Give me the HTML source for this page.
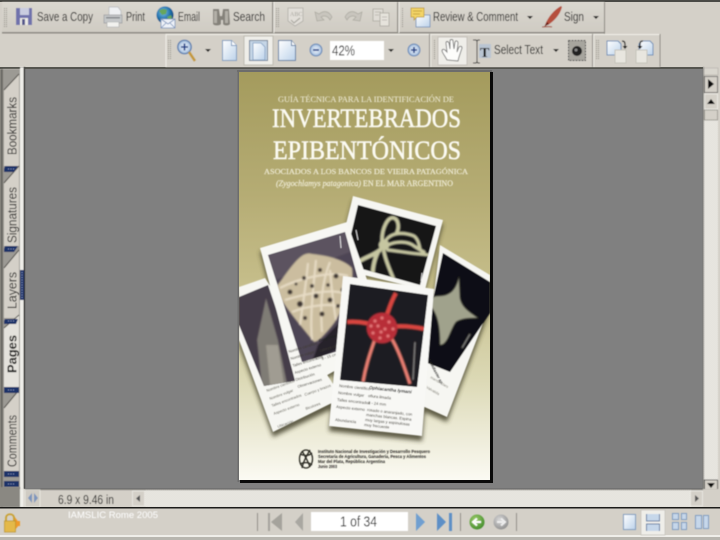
<!DOCTYPE html>
<html>
<head>
<meta charset="utf-8">
<style>
html,body{margin:0;padding:0;background:#d4d0c8;width:720px;height:540px;overflow:hidden}
svg{display:block}
text{font-family:"Liberation Sans",sans-serif}
.t{font-size:12.5px;fill:#1c1c1c}
.s{font-family:"Liberation Serif",serif}
</style>
</head>
<body>
<svg width="720" height="540" viewBox="0 0 720 540" xmlns="http://www.w3.org/2000/svg">
<defs>
<linearGradient id="cover" x1="0" y1="0" x2="0" y2="1">
<stop offset="0" stop-color="#a49b5d"/><stop offset=".3" stop-color="#b5ac74"/><stop offset=".5" stop-color="#c4bc88"/><stop offset=".75" stop-color="#dbd8b4"/><stop offset="1" stop-color="#fbfaf3"/>
</linearGradient>
<linearGradient id="tb" x1="0" y1="0" x2="0" y2="1"><stop offset="0" stop-color="#dad7cf"/><stop offset="1" stop-color="#cfcbc3"/></linearGradient>
<linearGradient id="pg" x1="0" y1="0" x2="1" y2="1"><stop offset="0" stop-color="#fff"/><stop offset="1" stop-color="#bcd2ea"/></linearGradient>
<radialGradient id="globe" cx=".4" cy=".35" r=".7"><stop offset="0" stop-color="#7dc0e8"/><stop offset=".6" stop-color="#1f6fa8"/><stop offset="1" stop-color="#123f70"/></radialGradient>
<radialGradient id="grn" cx=".4" cy=".35" r=".7"><stop offset="0" stop-color="#a2cf6c"/><stop offset="1" stop-color="#3e8a2a"/></radialGradient>
<radialGradient id="gry" cx=".4" cy=".35" r=".7"><stop offset="0" stop-color="#d8d8d8"/><stop offset="1" stop-color="#8e8e8e"/></radialGradient>
<radialGradient id="blu" cx=".5" cy=".5" r=".55"><stop offset="0" stop-color="#f2f6fb"/><stop offset=".65" stop-color="#bcd0e8"/><stop offset="1" stop-color="#6f8fbc"/></radialGradient>
<pattern id="dither" width="2" height="2" patternUnits="userSpaceOnUse"><rect width="2" height="2" fill="#d8d5cd"/><rect width="1" height="1" fill="#f4f3ef"/><rect x="1" y="1" width="1" height="1" fill="#f4f3ef"/></pattern>
<pattern id="grip" width="2" height="2" patternUnits="userSpaceOnUse"><rect width="1" height="1" fill="#8a877f"/></pattern>
<filter id="b" x="-5%" y="-5%" width="110%" height="110%"><feGaussianBlur stdDeviation=".4"/></filter>
<filter id="b1" x="-5%" y="-5%" width="110%" height="110%"><feGaussianBlur stdDeviation=".8"/></filter>
<filter id="sh" x="-20%" y="-20%" width="140%" height="140%"><feGaussianBlur stdDeviation="2.5"/></filter>
<clipPath id="cpage"><rect x="239" y="72" width="251" height="408"/></clipPath>
<clipPath id="ph2"><polygon points="358,205 436,226 420,285 344,264"/></clipPath>
<clipPath id="ph1"><polygon points="268,255 345,232 375,340 302,362"/></clipPath>
<clipPath id="ph0"><polygon points="239,297 268,285 300,380 264,386 239,325"/></clipPath>
<clipPath id="ph3"><polygon points="443,253 490,282 490,313 450,372 420,360"/></clipPath>
<clipPath id="ph4"><polygon points="350,284 428,295 417,387 340,380"/></clipPath>
</defs>

<rect width="720" height="540" fill="#d4d0c8"/>
<rect y="0" width="720" height="2" fill="#4a4a46"/>
<rect y="67" width="720" height="2" fill="#55554f"/>

<g filter="url(#b)">
<rect x="2" y="2" width="270" height="31" fill="url(#tb)"/>
<rect x="274" y="2" width="123" height="31" fill="url(#tb)"/>
<rect x="399" y="2" width="205" height="31" fill="url(#tb)"/>
<rect x="2" y="32" width="602" height="1.500" fill="#8c8982"/>
<rect x="604" y="2" width="1" height="32" fill="#8c8982"/>
<rect x="272" y="2" width="1.400" height="31" fill="#8f8c85"/>
<rect x="273.400" y="2" width="1" height="31" fill="#f2f0ea"/>
<rect x="397" y="2" width="1.400" height="31" fill="#8f8c85"/>
<rect x="398.400" y="2" width="1" height="31" fill="#f2f0ea"/>
<rect x="166" y="34" width="494" height="33" fill="#d4d0c8"/>
<rect x="166" y="34" width="494" height="1" fill="#f2f0ea"/>
<rect x="165.500" y="34" width="1" height="33" fill="#f2f0ea"/>
<rect x="429" y="34" width="1.200" height="33" fill="#8f8c85"/>
<rect x="430.200" y="34" width="1" height="33" fill="#f2f0ea"/>
<rect x="592" y="34" width="1.200" height="33" fill="#8f8c85"/>
<rect x="593.200" y="34" width="1" height="33" fill="#f2f0ea"/>
<rect x="659.500" y="34" width="1" height="33" fill="#8f8c85"/>
<rect x="4" y="8" width="3" height="20" fill="url(#grip)"/>
<rect x="276" y="8" width="3" height="20" fill="url(#grip)"/>
<rect x="401" y="8" width="3" height="20" fill="url(#grip)"/>
<rect x="168" y="40" width="3" height="20" fill="url(#grip)"/>
<rect x="433" y="40" width="3" height="20" fill="url(#grip)"/>
<rect x="596" y="40" width="3" height="20" fill="url(#grip)"/>

<path d="M16 8h16v17H16z" fill="#6f72ac"/><path d="M20 8h9v7h-9z" fill="#c9cce0"/><path d="M20 18h8v7h-8z" fill="#ecebe6"/><rect x="22" y="19" width="3" height="6" fill="#55588c"/>
<text class="t" x="37" y="21" textLength="56" lengthAdjust="spacingAndGlyphs">Save a Copy</text>
<path d="M109 7h9l3 4v6h-12z" fill="#eef0f2" stroke="#b5b8bd" stroke-width=".7"/><path d="M104 15h18v8h-18z" fill="#c4c7c8" stroke="#9a9c9f" stroke-width=".7"/><path d="M107 22h12v5h-12z" fill="#f2f2ee" stroke="#a9abad" stroke-width=".6"/><rect x="106" y="17" width="14" height="1.500" fill="#85888c"/>
<text class="t" x="126" y="21" textLength="19" lengthAdjust="spacingAndGlyphs">Print</text>
<circle cx="165" cy="15" r="8.600" fill="url(#globe)"/><path d="M159 11c3-3 6-2 8-1l-1 4-4 1zM167 17l4-2 1 3-3 3z" fill="#66a65c"/><path d="M161 19h14v9h-14z" fill="#eef2f8" stroke="#7b94bb" stroke-width=".8"/><path d="M161 19l7 5 7-5M161 28l5-5M175 28l-5-5" fill="none" stroke="#7b94bb" stroke-width=".8"/>
<text class="t" x="178" y="21" textLength="22" lengthAdjust="spacingAndGlyphs">Email</text>
<path d="M213 9h6l1 7h2l1-7h6l1 15c-1 2-6 2-7 0v-4h-2v4c-1 2-7 2-8 0z" fill="#85827a"/><path d="M214 11h3v12h-3zM225 11h3v12h-3z" fill="#b3b0a8"/>
<text class="t" x="233" y="21" textLength="32" lengthAdjust="spacingAndGlyphs">Search</text>
<path d="M288 8h15v13l-8 5-7-5z" fill="#e2dfd9" stroke="#b0aea7" stroke-width=".8"/><text x="290" y="16" font-size="6" fill="#a3a199" class="s">ABC</text><path d="M291 20l3 3 6-5" fill="none" stroke="#aaa8a0" stroke-width="1.200"/>
<path d="M317 21l-2-9 4 2c5-4 10-3 13 3l-2 3c-2-4-6-5-9-3l3 3z" fill="#c8c5bd" stroke="#aaa89f" stroke-width=".7"/>
<path d="M360 21l2-9-4 2c-5-4-10-3-13 3l2 3c2-4 6-5 9-3l-3 3z" fill="#c8c5bd" stroke="#aaa89f" stroke-width=".7"/>
<path d="M373 9h10v12h-10z" fill="#dfdcd5" stroke="#aaa89f" stroke-width=".8"/><path d="M380 13h9v13h-9z" fill="#e6e3dc" stroke="#aaa89f" stroke-width=".8"/><path d="M375 12h6M375 15h4M382 17h5M382 20h5" stroke="#b4b1a9" stroke-width=".8"/>
<path d="M416 15h14v12h-14z" fill="url(#pg)" stroke="#6e8cb4" stroke-width=".8"/><path d="M411 8h13v9h-7l-3 3v-3h-3z" fill="#f3d468" stroke="#b8952f" stroke-width=".7"/><path d="M413 11h9M413 14h7" stroke="#b8952f" stroke-width=".7"/>
<text class="t" x="433" y="21" textLength="85" lengthAdjust="spacingAndGlyphs">Review &amp; Comment</text>
<path d="M527 16h6l-3 3z" fill="#222"/>
<path d="M545 25c3-8 9-15 16-19l1 1c-2 8-8 14-14 18z" fill="#b5503c"/><path d="M544 27l3-5 2 2z" fill="#6a1a12"/><path d="M542 27c4 0 7-1 10 0" stroke="#a24b3a" fill="none"/>
<text class="t" x="564" y="21" textLength="20" lengthAdjust="spacingAndGlyphs">Sign</text>
<path d="M593 16h6l-3 3z" fill="#222"/>

<circle cx="184.500" cy="47" r="6.800" fill="url(#blu)" stroke="#5d7fae" stroke-width="1.200"/><path d="M181 47h7M184.500 43.500v7" stroke="#1f3f86" stroke-width="1.600"/><path d="M189 52l6 9" stroke="#c49a3a" stroke-width="2.600"/>
<path d="M205 49h6l-3 3z" fill="#222"/>
<path d="M222.500 40.500h9l5 5v15h-14z" fill="url(#pg)" stroke="#7f9cc0"/><path d="M231.500 40.500v5h5" fill="#fff" stroke="#7f9cc0"/>
<rect x="244" y="36" width="29" height="29" fill="#efeee9" stroke="#bcb9b0"/>
<rect x="249.500" y="40.500" width="18" height="20" fill="#c5d5e6" stroke="#6f8096"/><path d="M253 43h8l4 4v13h-12z" fill="url(#pg)" stroke="#7f9cc0" stroke-width=".8"/>
<path d="M278.500 40.500h13l4 5v15h-17z" fill="url(#pg)" stroke="#5f7fa6"/><path d="M291.500 40.500v5h4" fill="#fff" stroke="#5f7fa6"/>
<circle cx="316" cy="50" r="6" fill="url(#blu)" stroke="#6c8cb8"/><path d="M313 50h6" stroke="#1f3f86" stroke-width="1.600"/>
<rect x="330" y="41" width="54" height="19" fill="#fff"/>
<text x="332" y="55.500" font-size="14.500" fill="#222" textLength="23" lengthAdjust="spacingAndGlyphs">42%</text>
<path d="M388 49h6l-3 3z" fill="#222"/>
<circle cx="414" cy="50" r="6" fill="url(#blu)" stroke="#6c8cb8"/><path d="M411 50h6M414 47v6" stroke="#1f3f86" stroke-width="1.600"/>
<rect x="438" y="37" width="29" height="28" fill="#efeee9" stroke="#c4c1b9"/>
<path d="M447 60c-2-4-4-6-5-9 0-2 2-2 3-1l2 2-1-9c0-2 2-2 3 0l1 6 0-8c0-2 3-2 3 0l1 8 1-7c1-2 3-1 3 1l-1 9 2-5c1-1 3-1 3 1l-3 9-1 4z" fill="#fdfdfb" stroke="#777" stroke-width=".9"/>
<path d="M473 40h3l1 1 1-1h2M477 41v21M473 63h3l1-1 1 1h2" fill="none" stroke="#333" stroke-width="1"/>
<rect x="479" y="44" width="12" height="14" fill="#b9c5d2"/><text x="480" y="57" font-size="14" font-weight="bold" class="s" fill="#111">T</text>
<text class="t" x="494" y="54" textLength="49" lengthAdjust="spacingAndGlyphs">Select Text</text>
<path d="M553 49h6l-3 3z" fill="#222"/>
<rect x="568.500" y="40.500" width="17" height="20" fill="#a7a59e" stroke="#444" stroke-dasharray="2 1"/><circle cx="577" cy="51" r="5" fill="#222"/><circle cx="576" cy="50" r="1.500" fill="#888"/>
<path d="M607 41h11l3 3v11h-14z" fill="url(#pg)" stroke="#6f90b8"/><path d="M615 50h11v13h-11z" fill="#e8e6df" stroke="#c5c3ba"/><path d="M622 41c2 0 3 1 3 3v2" fill="none" stroke="#111" stroke-width="1.200"/><path d="M622.500 46h5l-2.500 3z" fill="#111"/>
<path d="M641 41h9l3 3v11h-14v-11z" fill="url(#pg)" stroke="#6f90b8"/><path d="M636 50h11v13h-11z" fill="#e8e6df" stroke="#c5c3ba"/><path d="M640 47v-3c0-2 1-3 3-3" fill="none" stroke="#111" stroke-width="1.200"/><path d="M637.500 46h5l-2.500 3z" fill="#111"/>
</g>

<rect x="25" y="69" width="678" height="420" fill="#808080"/>
<rect x="703" y="67" width="17" height="423" fill="#d4d0c8"/>
<rect x="24" y="69" width="1" height="420" fill="#555"/>

<g filter="url(#b)">
<rect x="0" y="69" width="20" height="438" fill="#9c9a94"/>
<rect x="0" y="69" width="3" height="438" fill="#6e6d68"/>
<rect x="20" y="67" width="3.500" height="422" fill="#efeee9"/>
<rect x="23.500" y="67" width="1.500" height="422" fill="#3c3c3a"/>
<rect x="20" y="270" width="4" height="30" fill="#1c3068"/>
<path d="M4 90L19 74V166H4z" fill="#d4d0c8"/><path d="M4 90L19 74" stroke="#55534e" fill="none"/>
<path d="M4 183L19 166V246H4z" fill="#d4d0c8"/><path d="M4 183L19 166" stroke="#55534e" fill="none"/>
<path d="M4 268L19 250V318H4z" fill="#d4d0c8"/><path d="M4 268L19 250" stroke="#55534e" fill="none"/>
<path d="M4 328L19 315V388H4z" fill="#e4e2dc"/><path d="M4 328L19 315" stroke="#55534e" fill="none"/>
<path d="M4 408L19 390V472H4z" fill="#d4d0c8"/><path d="M4 408L19 390" stroke="#55534e" fill="none"/>
<path d="M4 172h10l4-6h-13l-1 3z" fill="#1c3068"/>
<path d="M4 252h10l4-6h-13l-1 3z" fill="#1c3068"/>
<path d="M4 324h12l2-5h-13l-1 2z" fill="#1c3068"/>
<rect x="4" y="387" width="15" height="6" fill="#1c3068"/>
<rect x="4" y="471" width="15" height="6" fill="#1c3068"/>
<rect x="4" y="481" width="15" height="6" fill="#1c3068"/>
<path d="M8 169h7M8 249h7M8 321h7M8 390h7M8 474h7M8 484h7" stroke="#9fb2dc" stroke-width=".8" stroke-dasharray="1 1.500"/>
<path d="M22 272v26" stroke="#9fb2dc" stroke-width=".8" stroke-dasharray="1 1.500"/>
<text transform="translate(16.500,155) rotate(-90)" font-size="12.500" fill="#222" textLength="58" lengthAdjust="spacingAndGlyphs">Bookmarks</text>
<text transform="translate(16.500,243) rotate(-90)" font-size="12.500" fill="#222" textLength="56" lengthAdjust="spacingAndGlyphs">Signatures</text>
<text transform="translate(16.500,309) rotate(-90)" font-size="12.500" fill="#222" textLength="37" lengthAdjust="spacingAndGlyphs">Layers</text>
<text transform="translate(16.500,373) rotate(-90)" font-size="12.500" font-weight="bold" fill="#111" textLength="38" lengthAdjust="spacingAndGlyphs">Pages</text>
<text transform="translate(16.500,467) rotate(-90)" font-size="12.500" fill="#222" textLength="52" lengthAdjust="spacingAndGlyphs">Comments</text>
</g>

<rect x="237" y="70" width="255" height="2" fill="#6c6c6c"/>
<rect x="237.500" y="71" width="2" height="411" fill="#6c6c6c"/>
<rect x="490" y="72" width="3" height="411" fill="#0a0a0a"/>
<rect x="240" y="480" width="253" height="3" fill="#0a0a0a"/>
<rect x="239" y="72" width="251" height="408" fill="url(#cover)"/>

<g clip-path="url(#cpage)">
<g filter="url(#b)">
<text class="s" x="278" y="102" font-size="8.200" fill="#f3f0de" textLength="176" lengthAdjust="spacingAndGlyphs">GUÍA TÉCNICA PARA LA IDENTIFICACIÓN DE</text>
<text class="s" x="272" y="127" font-size="26" fill="#fbfaf2" stroke="#fbfaf2" stroke-width=".55" textLength="189" lengthAdjust="spacingAndGlyphs">INVERTEBRADOS</text>
<text class="s" x="273" y="159" font-size="26" fill="#fbfaf2" stroke="#fbfaf2" stroke-width=".55" textLength="188" lengthAdjust="spacingAndGlyphs">EPIBENTÓNICOS</text>
<text class="s" x="264" y="174" font-size="7.800" fill="#f0edd8" stroke="#f0edd8" stroke-width=".15" textLength="204" lengthAdjust="spacingAndGlyphs">ASOCIADOS A LOS BANCOS DE VIEIRA PATAGÓNICA</text>
<text class="s" x="276" y="186" font-size="8" fill="#f0edd8" stroke="#f0edd8" stroke-width=".15" textLength="177" lengthAdjust="spacingAndGlyphs"><tspan font-style="italic">(Zygochlamys patagonica)</tspan> EN EL MAR ARGENTINO</text>
</g>

<g filter="url(#sh)" fill="#3a3824" opacity=".8">
<polygon points="353,200 443,224 425,290 335,270"/>
<polygon points="260,252 347,226 385,340 298,398"/>
<polygon points="239,292 265,283 340,405 273,437 239,345"/>
<polygon points="440,250 490,280 490,310 447,422 420,410"/>
<polygon points="343,281 434,294 422,441 329,431"/>
</g>

<g filter="url(#b)">
<polygon points="239,287 265,278 342,398 273,432 239,340" fill="#f6f6f2"/>
<polygon points="239,297 268,285 300,380 264,386 239,325" fill="#453c48"/>
<g clip-path="url(#ph0)" filter="url(#b1)">
<path d="M266 298L257 340 262 388H288L278 340z" fill="#7f7b74"/>
<path d="M266 345l4 40h14l-6-40z" fill="#a09c92"/>
</g>
<g fill="#5a584e" font-size="3.800" font-family="Liberation Serif">
<text transform="translate(267,392) rotate(-20)">Nombre científico</text>
<text transform="translate(270,400) rotate(-20)">Nombre vulgar</text>
<text transform="translate(272,407) rotate(-20)">Talles encontrados</text>
<text transform="translate(274,415) rotate(-20)">Aspecto externo</text>
<text transform="translate(278,428) rotate(-20)">Ubicación</text>
<text transform="translate(305,396) rotate(-20)">Cuerpo y brazos</text>
<text transform="translate(306,410) rotate(-20)">Bicolores</text>
</g>

<polygon points="440,245 490,275 490,305 447,417 420,405" fill="#f6f6f2"/>
<polygon points="443,253 490,282 490,313 450,372 420,360" fill="#111113"/>
<g clip-path="url(#ph3)" filter="url(#b1)">
<path d="M459 277C456 288 452 296 438 296 430 296 428 302 432 308 436 314 440 322 440 345 448 345 450 330 456 322 462 318 470 318 478 318 470 312 462 308 460 298z" fill="#a0a28c"/>
<path d="M462 348l8-14" stroke="#cfcfc8" stroke-width="1"/>
</g>
<text transform="translate(428,360) rotate(62)" font-size="4" font-family="Liberation Serif" font-weight="bold" font-style="italic" fill="#222">Labidiaster sp.</text>
<g fill="#77756a" font-size="3.600" font-family="Liberation Serif"><text transform="translate(430,378) rotate(30)">marrón claro</text><text transform="translate(426,388) rotate(30)">Valvatida</text></g>

<polygon points="353,196 443,220 425,290 335,268" fill="#f6f6f2"/>
<polygon points="358,205 436,226 420,285 344,264" fill="#121216"/>
<g clip-path="url(#ph2)" fill="none" stroke="#c6c6a0" stroke-linecap="round" filter="url(#b1)">
<circle cx="384" cy="245" r="5" fill="#c6c6a0"/>
<path d="M382 240c0-12 6-24 12-22 5 2 5 10 3 14" stroke-width="4"/>
<path d="M386 240c6-8 18-8 28-4 4 3 5 8 6 13" stroke-width="3.500"/>
<path d="M388 245c8-4 20-4 26 1 3 2 6 4 10 6" stroke-width="3.500"/>
<path d="M388 250c10 1 26 4 42 5" stroke-width="3.500"/>
<path d="M380 250c-6 5-14 7-20 11" stroke-width="4.500"/>
<path d="M384 252c2 10 6 18 10 28" stroke-width="4"/>
<path d="M378 252c-4 8-6 18-5 26" stroke-width="4.500"/>
</g>
<path d="M421 281l1-8M356 230l2 10" stroke="#eee" stroke-width=".8"/>

<polygon points="260,248 347,222 388,340 298,392" fill="#f7f7f3"/>
<polygon points="268,255 345,232 375,340 302,362" fill="#4e4554"/>
<g clip-path="url(#ph1)" filter="url(#b1)">
<polygon points="268,255 345,232 350,252 275,280" fill="#5b5361"/>
<path d="M275 288C290 270 300 250 312 254 330 256 345 260 352 268 355 285 345 305 335 322 325 335 318 342 314 342 308 335 300 325 292 315 285 305 278 297 275 288z" fill="#cbbd9f"/>
<path d="M280 288c15-8 50-18 68-12M285 300c20-6 45-12 62-6M292 312c15-6 40-10 50-4M312 340c-2-20 0-40 4-80M322 332c-2-30 0-50 8-70M300 325c2-15 6-40 8-62M336 320c-3-15-4-30-6-50" stroke="#e8ddc6" stroke-width="2" fill="none"/>
<g fill="#3e3530"><circle cx="290" cy="292" r="2.500"/><circle cx="304" cy="278" r="2"/><circle cx="320" cy="270" r="2"/><circle cx="336" cy="276" r="2.500"/><circle cx="343" cy="290" r="2.500"/><circle cx="300" cy="304" r="3"/><circle cx="316" cy="296" r="2.500"/><circle cx="330" cy="300" r="2.500"/><circle cx="305" cy="318" r="2"/><circle cx="322" cy="314" r="2.500"/><circle cx="296" cy="284" r="1.500"/><circle cx="312" cy="286" r="2"/><circle cx="328" cy="285" r="1.800"/><circle cx="338" cy="306" r="2"/></g>
<polygon points="318,345 340,322 372,332 312,362" fill="#26242c"/>
</g>
<path d="M340 236l1 12" stroke="#eee" stroke-width=".9"/>
<g fill="#3e3c34" font-size="3.800" font-family="Liberation Serif">
<text transform="translate(289,353) rotate(-17)">Nombre científico</text>
<text transform="translate(319,342) rotate(-17)" font-weight="bold" font-style="italic" fill="#222">Gorgonocephalus</text>
<text transform="translate(291,360) rotate(-17)">Nombre vulgar</text>
<text transform="translate(293,367) rotate(-17)">Talles encontrados</text>
<text transform="translate(295,374) rotate(-17)">Aspecto externo</text>
<text transform="translate(296,381) rotate(-17)">Distribución</text>
<text transform="translate(298,388) rotate(-17)">Observaciones</text>
<text transform="translate(320,352) rotate(-17)">cabeza canasta</text>
<text transform="translate(322,360) rotate(-17)">8 - 15 cm</text>
</g>

<polygon points="343,276 434,289 422,436 329,426" fill="#f8f8f5"/>
<polygon points="350,284 428,295 417,387 340,380" fill="#1f1c20"/>
<g clip-path="url(#ph4)" filter="url(#b1)">
<path d="M396 293c-6 10-8 20-12 30M347 322c15-1 25 2 36 6M425 329c-15-3-28-4-40-1" stroke="#d8453f" stroke-width="4.500" fill="none"/>
<path d="M376 336c-5 15-10 28-13 46M390 336c8 12 14 30 20 48" stroke="#ea7f72" stroke-width="3.500" fill="none"/>
<circle cx="382" cy="328" r="15.500" fill="#b82d38"/>
<g fill="#e87b7d"><circle cx="375" cy="321" r="1.500"/><circle cx="382" cy="318" r="1.500"/><circle cx="389" cy="322" r="1.500"/><circle cx="393" cy="329" r="1.500"/><circle cx="388" cy="336" r="1.500"/><circle cx="380" cy="338" r="1.500"/><circle cx="373" cy="333" r="1.500"/><circle cx="371" cy="326" r="1.500"/><circle cx="378" cy="326" r="1.500"/><circle cx="385" cy="329" r="1.500"/><circle cx="381" cy="332" r="1.500"/></g>
<path d="M415 342l-2 38" stroke="#d8d8d2" stroke-width=".9"/>
</g>
<g fill="#3a3830" font-size="4" font-family="Liberation Serif">
<text transform="translate(339,387) rotate(6)">Nombre científico</text>
<text transform="translate(369,389) rotate(6)" font-weight="bold" font-style="italic" fill="#111" font-size="4.500">Ophiacantha lymani</text>
<text transform="translate(338,394) rotate(6)">Nombre vulgar</text>
<text transform="translate(368,397) rotate(6)">ofiura ilmada</text>
<text transform="translate(337,401) rotate(6)">Talles encontrados</text>
<text transform="translate(368,404) rotate(6)">3 - 24 mm</text>
<text transform="translate(336,408) rotate(6)">Aspecto externo</text>
<text transform="translate(367,411) rotate(6)">rosado o anaranjado, con</text>
<text transform="translate(366,416) rotate(6)">manchas blancas. Espina</text>
<text transform="translate(365,421) rotate(6)">muy largas y espinulosas</text>
<text transform="translate(364,426) rotate(6)">muy frecuente</text>
<text transform="translate(335,421) rotate(6)">Abundancia</text>
</g>

<g fill="none" stroke="#2c2a22" stroke-width="1.300">
<ellipse cx="306" cy="459" rx="6.500" ry="9"/><path d="M300 454c4 2 9 2 12-1M300 464c4-2 9-2 12 1M302 468c1-6 5-13 8-18M302 451c3 5 6 10 8 16"/>
</g>
<g fill="#1f1d18" font-size="4.700" font-weight="bold">
<text x="318" y="453" textLength="112" lengthAdjust="spacingAndGlyphs">Instituto Nacional de Investigación y Desarrollo Pesquero</text>
<text x="318" y="458" textLength="108" lengthAdjust="spacingAndGlyphs">Secretaría de Agricultura, Ganadería, Pesca y Alimentos</text>
<text x="318" y="463" textLength="67" lengthAdjust="spacingAndGlyphs">Mar del Plata, República Argentina</text>
<text x="318" y="468" textLength="19" lengthAdjust="spacingAndGlyphs">Junio 2003</text>
</g>
</g>
</g>

<g filter="url(#b)">
<rect x="703" y="67" width="1" height="423" fill="#6d6d6a"/>
<rect x="704" y="94" width="14" height="387" fill="url(#dither)"/>
<rect x="704" y="68" width="14" height="7" fill="#d9d6ce" stroke="#a9a69f" stroke-width=".5"/>
<rect x="704.500" y="76.500" width="13" height="16" fill="#d4d0c8" stroke="#555" stroke-width=".7"/>
<path d="M708 79l6 5-6 5z" fill="#111"/>
<rect x="704.500" y="94" width="13" height="15" fill="#d4d0c8" stroke="#efeee9" stroke-width=".7"/>
<path d="M707 104h8l-4-5z" fill="#111"/>
<rect x="704.500" y="110" width="13" height="10" fill="#d4d0c8" stroke="#8a8880" stroke-width=".7"/>
<rect x="704.500" y="480" width="13" height="10" fill="#d4d0c8" stroke="#333" stroke-width=".7"/>
<path d="M707 483h8l-4 5z" fill="#111"/>
</g>

<g filter="url(#b)">
<rect x="20" y="489" width="700" height="18" fill="#d4d0c8"/>
<rect x="25" y="489" width="678" height="1" fill="#3c3c3a"/>
<rect x="145" y="490" width="546" height="17" fill="url(#dither)"/>
<rect x="0" y="487" width="20" height="20" fill="#8a8882"/>
<rect x="20" y="489" width="3.500" height="18" fill="#efeee9"/>
<rect x="25" y="490" width="15" height="17" fill="#cfcbc3" stroke="#efeee9" stroke-width=".7"/>
<path d="M32 493l-4 5 4 5zM34 493l4 5-4 5z" fill="#7d95bd"/>
<text x="58" y="504" font-size="13" fill="#222" textLength="56" lengthAdjust="spacingAndGlyphs">6.9 x 9.46 in</text>
<rect x="132.500" y="491" width="12" height="15" fill="#d4d0c8" stroke="#efeee9" stroke-width=".7"/>
<path d="M140 495l-4 3.500 4 3.500z" fill="#555"/>
<rect x="690.500" y="491" width="12" height="15" fill="#d4d0c8" stroke="#efeee9" stroke-width=".7"/>
<path d="M695 495l4 3.500-4 3.500z" fill="#555"/>
</g>
<rect x="0" y="507" width="720" height="1.500" fill="#1c1c1a"/>

<rect x="0" y="508.500" width="720" height="27" fill="#d4d0c8"/>
<rect x="0" y="535" width="720" height="2" fill="#efeee9"/>
<rect x="0" y="537" width="720" height="3" fill="#b8b6af"/>
<g filter="url(#b)">
<g fill="#ee9a2c"><path d="M14 516l6 8-6 7z"/><path d="M20 521h-5v5h5z"/></g>
<path d="M6 522v-4c0-5 8-5 8 0v4" fill="none" stroke="#c9a032" stroke-width="1.800"/>
<rect x="4.500" y="521" width="11" height="11" fill="#e4b948" stroke="#b48a22" stroke-width=".6"/>
<text x="68" y="518" font-size="9.500" fill="#ffffff" textLength="90" lengthAdjust="spacing">IAMSLIC Rome 2005</text>
<rect x="257" y="513" width="1" height="18" fill="#94918a"/>
<path d="M268 513h2v18h-2zM282 513v18l-11-9z" fill="#a5a39c"/>
<path d="M303 513v18l-8-9z" fill="#a9a7a1"/>
<rect x="311" y="512" width="97" height="19" fill="#fff"/>
<text x="340" y="526.500" font-size="15" fill="#222" textLength="37" lengthAdjust="spacingAndGlyphs">1 of 34</text>
<path d="M416 513v18l9-9z" fill="#6f9fd0"/>
<path d="M437 513v18l9-9zM449 513h3v18h-3z" fill="#5d8fc6"/>
<rect x="460" y="513" width="1" height="18" fill="#94918a"/>
<circle cx="477" cy="522" r="7.500" fill="url(#grn)"/><path d="M481 522h-6M477 518.500l-4 3.500 4 3.500" fill="none" stroke="#fff" stroke-width="2"/>
<circle cx="501" cy="522" r="7.500" fill="url(#gry)"/><path d="M497 522h6M501 518.500l4 3.500-4 3.500" fill="none" stroke="#eee" stroke-width="2"/>
<rect x="516" y="513" width="1" height="18" fill="#94918a"/>
<rect x="623.500" y="514.500" width="12" height="15" fill="url(#pg)" stroke="#7f9cc0"/>
<rect x="641" y="510" width="24" height="25" fill="#efeee9" stroke="#c4c1b9" stroke-width=".7"/>
<path d="M646.500 514v7h13v-7M646.500 531v-7h13v7" fill="#c6d7ea" stroke="#5e7ca4"/>
<path d="M672.500 513.500h6v6h-6zM681.500 513.500h5v6h-5zM672.500 522.500h6v7h-6zM681.500 522.500h5v7h-5z" fill="#c6d7ea" stroke="#7f9cc0"/>
<path d="M695.500 515.500h6v13h-6zM703.500 515.500h5v13h-5z" fill="#c6d7ea" stroke="#7f9cc0"/>
</g>
</svg>
</body>
</html>
